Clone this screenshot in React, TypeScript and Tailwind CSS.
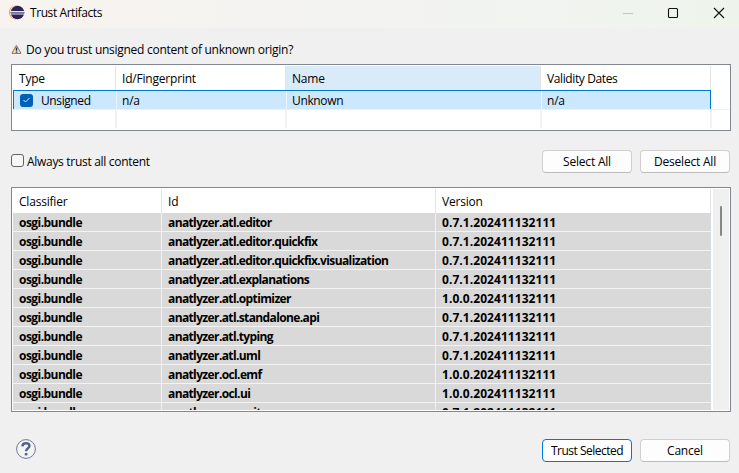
import React from "react";

const bundles = [
  ["anatlyzer.atl.editor", "0.7.1.202411132111"],
  ["anatlyzer.atl.editor.quickfix", "0.7.1.202411132111"],
  ["anatlyzer.atl.editor.quickfix.visualization", "0.7.1.202411132111"],
  ["anatlyzer.atl.explanations", "0.7.1.202411132111"],
  ["anatlyzer.atl.optimizer", "1.0.0.202411132111"],
  ["anatlyzer.atl.standalone.api", "0.7.1.202411132111"],
  ["anatlyzer.atl.typing", "0.7.1.202411132111"],
  ["anatlyzer.atl.uml", "0.7.1.202411132111"],
  ["anatlyzer.ocl.emf", "1.0.0.202411132111"],
  ["anatlyzer.ocl.ui", "1.0.0.202411132111"],
  ["anatlyzer.use.witness", "0.7.1.202411132111"],
];

function EclipseLogo() {
  return (
    <svg width="16" height="16" viewBox="0 0 16 16" className="ml-[9px] shrink-0">
      <circle cx="7" cy="7.500" r="7" fill="#f39a3c" />
      <circle cx="8" cy="7.500" r="7" fill="#fff5ea" />
      <circle cx="8.5" cy="7.500" r="6.800" fill="#2c2255" />
      <path d="M1.400 6.500h14.200M1.400 9h14.200" stroke="#e8e6f2" strokeWidth="1" />
      <path d="M1.500 7.700h14" stroke="#8a86ae" strokeWidth="1" />
    </svg>
  );
}

function WarningIcon() {
  return (
    <svg width="11" height="11" viewBox="0 0 11 11" className="shrink-0">
      <path d="M5.500 1.4 10 9.4H1z" fill="#fbdfae" stroke="#77777c" strokeWidth="1" strokeLinejoin="round" />
      <path d="M5.3 1.2 1 9" stroke="#c98a50" strokeWidth=".9" />
      <path d="M5.500 3.6v3.200M5.500 7.4v1.300" stroke="#202d52" strokeWidth="1.4" />
    </svg>
  );
}

function HelpIcon() {
  return (
    <svg width="20" height="20" viewBox="0 0 20 20" className="shrink-0">
      <circle cx="10" cy="10" r="9.4" fill="#f3f4f6" stroke="#6d7890" strokeWidth="1" />
      <path d="M6.4 7.4C6.5 5.200 7.800 4.300 9.900 4.300c2.200 0 3.500 1 3.500 2.700 0 2.400-3.300 2.400-3.300 5.200" fill="none" stroke="#53648c" strokeWidth="2.500" />
      <path d="M8.800 14h2.600v2.400H8.800z" fill="#53648c" />
    </svg>
  );
}

function Button({ label, primary }: { label: string; primary?: boolean }) {
  return (
    <button
      className={
        primary
          ? "h-[23px] w-[90px] rounded-[4px] border border-[#0078d4] bg-[#fdfdfd] tracking-[-0.5px]"
          : "h-[23px] w-[90px] rounded-[4px] border border-[#d0d0d0] border-b-[#bcbcbc] bg-[#fdfdfd] tracking-[-0.2px]"
      }
    >
      {label}
    </button>
  );
}

export default function App() {
  return (
    <div className="flex h-[473px] w-[739px] flex-col overflow-hidden whitespace-nowrap bg-[#f0f0f0] font-['Open_Sans','Noto_Sans',sans-serif] text-xs leading-4 tracking-[-0.2px] text-black">
      <header className="flex h-7 shrink-0 items-center bg-linear-to-r from-[#f8f3ef] via-[#f3f3f2] to-[#eef4ec] pb-[3px]">
        <EclipseLogo />
        <span className="ml-[5px] tracking-[-0.42px]">Trust Artifacts</span>
        <svg width="104" height="14" viewBox="0 0 104 14" className="ml-auto mr-[13px]" fill="none">
          <path d="M1 7.500h10" stroke="#c3c4c2" />
          <rect x="46.500" y="2.500" width="9" height="9" rx="1" stroke="#111" strokeWidth="1.100" />
          <path d="m92 2 10 10M102 2 92 12" stroke="#111" strokeWidth="1.100" />
        </svg>
      </header>

      <main className="flex flex-col pl-[11px] pr-[9px]">
        <div className="mt-[13px] flex h-4 items-center">
          <WarningIcon />
          <span className="ml-1 pt-[2px] tracking-[-0.27px]">Do you trust unsigned content of unknown origin?</span>
        </div>

        <section className="mt-[7px] h-[67px] w-[720px] border border-[#828790] bg-white p-px">
          <div className="grid h-6 grid-cols-[103px_170px_255px_170px] grid-rows-[24px] leading-[26px]">
            <div className="border-r border-[#e5e5e5] pl-[6px]">Type</div>
            <div className="border-r border-[#e5e5e5] pl-[6px]">Id/Fingerprint</div>
            <div className="border-r border-[#e5e5e5] bg-[#d9ebf9] pl-[6px]">Name</div>
            <div className="border-r border-[#e5e5e5] pl-[6px] tracking-[-0.38px]">Validity Dates</div>
          </div>
          <div className="grid h-[19px] w-[698px] grid-cols-[103px_170px_255px_170px] grid-rows-[18px] border-x border-t border-x-[#0078d4] border-t-[#0078d4] bg-[#cce8ff] leading-[19px]">
            <div className="flex items-center border-r border-[#edf3fa] pl-[6px]">
              <span className="flex size-[13px] items-center justify-center rounded-[3px] bg-[#005fb8]">
                <svg width="9" height="8" viewBox="0 0 9 8" fill="none">
                  <path d="m1.500 4 2 2 4-4" stroke="#d6e8f8" />
                </svg>
              </span>
              <span className="ml-2 tracking-[-0.4px]">Unsigned</span>
            </div>
            <div className="border-r border-[#edf3fa] pl-[5px]">n/a</div>
            <div className="border-r border-[#edf3fa] pl-[5px] tracking-[-0.35px]">Unknown</div>
            <div className="pl-[5px]">n/a</div>
          </div>
          <div className="grid h-[19px] w-[716px] grid-cols-[104px_170px_255px_170px] border-t border-[#f0f0f0]">
            <div className="border-r-2 border-[#f0f2f6]" />
            <div className="border-r-2 border-[#f0f2f6]" />
            <div className="border-r-2 border-[#f0f2f6]" />
            <div className="border-r-2 border-[#f0f2f6]" />
          </div>
        </section>

        <div className="mt-[19px] flex h-[23px] items-center">
          <span className="mb-[2px] size-[13px] rounded-[3px] border border-[#626262] bg-[#f7f7f7]" />
          <span className="ml-[3px] tracking-[-0.3px]">Always trust all content</span>
          <div className="ml-auto flex gap-2">
            <Button label="Select All" />
            <Button label="Deselect All" />
          </div>
        </div>

        <section className="mt-[14px] flex h-[225px] w-[720px] justify-between border border-[#828790] bg-white p-px">
          <div className="h-[221px] w-[698px] overflow-hidden">
            <div className="grid h-6 grid-cols-[149px_274px_275px] grid-rows-[24px] leading-[26px]">
              <div className="border-r border-[#e5e5e5] pl-[6px]">Classifier</div>
              <div className="border-r border-[#e5e5e5] pl-[6px]">Id</div>
              <div className="border-r border-[#e5e5e5] pl-[6px]">Version</div>
            </div>
            {bundles.map(([id, version]) => (
              <div
                key={id}
                className="grid h-[19px] grid-cols-[149px_274px_275px] grid-rows-[18px] border-b border-[#f3f3f3] bg-[#d9d9d9] font-bold leading-5"
              >
                <div className="border-r border-[#f0f0f0] pl-[6px] tracking-[-0.55px]">osgi.bundle</div>
                <div className="border-r border-[#f0f0f0] pl-[6px] tracking-[-0.62px]">{id}</div>
                <div className="border-r border-[#d3dae1] pl-[6px] tracking-[0.06px]">{version}</div>
              </div>
            ))}
          </div>
          <div className="flex w-4 justify-center bg-[#f0f0f0]">
            <div className="mt-[17px] h-[30px] w-[2px] rounded-full bg-[#868686]" />
          </div>
        </section>
      </main>

      <footer className="mt-[27px] flex items-start pl-4 pr-[9px]">
        <HelpIcon />
        <div className="ml-auto flex gap-2">
          <Button label="Trust Selected" primary />
          <Button label="Cancel" />
        </div>
      </footer>
    </div>
  );
}
